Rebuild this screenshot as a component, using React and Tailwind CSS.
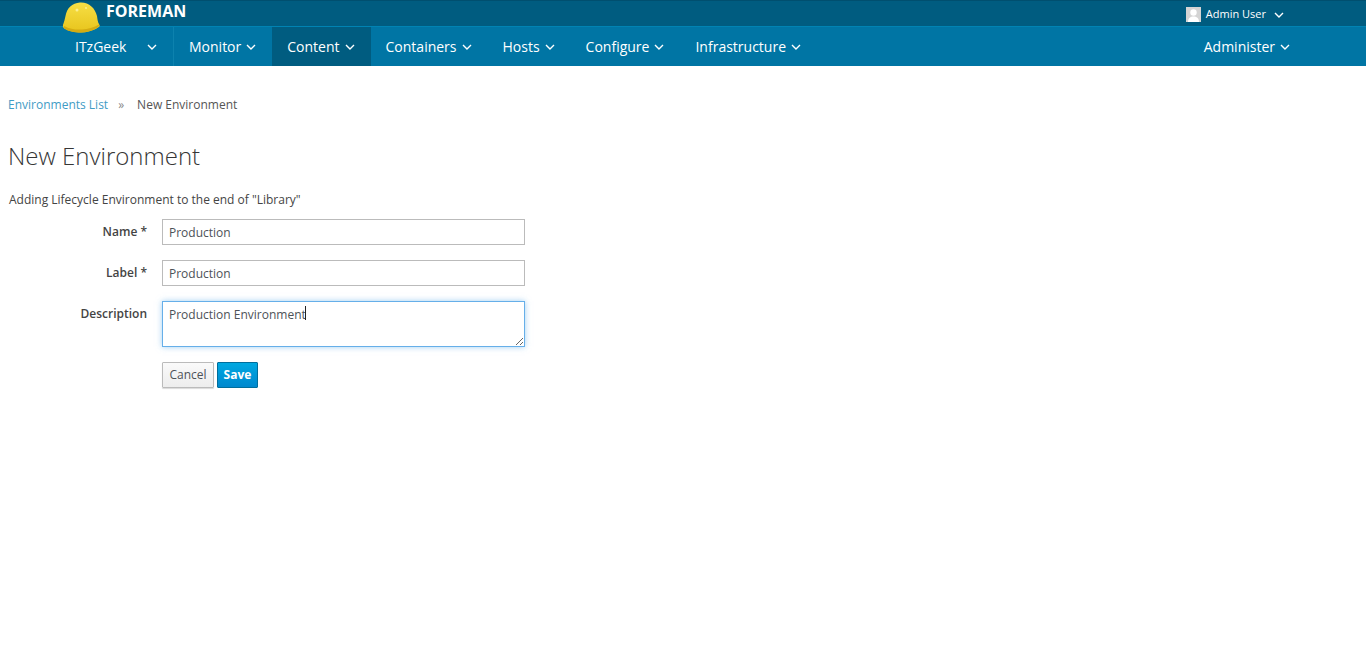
const navItems = ['Monitor', 'Content', 'Containers', 'Hosts', 'Configure', 'Infrastructure']

function Chevron({ className = '' }) {
  return (
    <svg viewBox="0 0 10 6" className={`w-[10px] h-[6px] ${className}`} fill="none" stroke="currentColor" strokeWidth="1.4">
      <path d="M1 1l4 4 4-4" />
    </svg>
  )
}

function Helmet() {
  return (
    <svg viewBox="0 0 40 33" className="absolute left-[61px] top-[1px] w-[40px] h-[33px]">
      <defs>
        <linearGradient id="hat" x1="0" y1="0" x2="0" y2="1">
          <stop offset="0" stopColor="#f6df45" />
          <stop offset="1" stopColor="#e8c41c" />
        </linearGradient>
      </defs>
      <path d="M2 24c1-3 2-6 2.500-9C6 7 11 2 19 1.500 28 1 34 7 36 15c.5 3 .5 6 2.500 9 1 1.500-2 3-5 4.500-3 1.500-8 3-13 3-7 0-13-1.500-16-3.500C2.500 27.500 1.500 26 2 24z" fill="url(#hat)" />
      <path d="M3 25c6 3 12 4 18 3.500 6-.5 12-2 17-5 .8 1.500-2 3.500-5 5-3 1.500-8 3-13 3-7 0-13-1.500-16-3.500-1-.7-1.500-1.700-1-3z" fill="#d4ac12" />
      <circle cx="16" cy="9" r="1.500" fill="#fbef8f" />
      <circle cx="25" cy="7" r="1" fill="#fbef8f" />
    </svg>
  )
}

function Avatar() {
  return (
    <svg viewBox="0 0 15 15" className="w-[15px] h-[15px] bg-[#d4d4d4]">
      <circle cx="7.500" cy="5.500" r="3.200" fill="#fff" />
      <path d="M2 15c0-4 2.500-5.500 5.500-5.500S13 11 13 15z" fill="#fff" />
    </svg>
  )
}

function FieldRow({ label, children, className = '' }) {
  return (
    <div className={`flex ${className}`}>
      <label className="w-[139px] pt-[4px] text-right text-[12px] leading-[17px] font-semibold text-[#444444]">{label}</label>
      <div className="ml-[15px] w-[363px]">{children}</div>
    </div>
  )
}

const inputClass = 'block w-full h-[26px] border border-[#bbbbbb] bg-white px-[6px] text-[12px] text-[#4d5258] outline-none'

export default function App() {
  return (
    <div className="min-h-[662px] bg-white font-['Open_Sans',sans-serif]">
      <header className="relative">
        <div className="flex h-[26px] items-center border-t border-[#004f6f] bg-[#005c80]">
          <span className="ml-[106px] -mt-[6px] text-[16px] font-bold leading-[22px] text-white">FOREMAN</span>
          <div className="ml-auto mr-[82px] mt-[2px] flex items-center text-white">
            <Avatar />
            <span className="ml-[5px] text-[11px]">Admin User</span>
            <Chevron className="ml-[8px]" />
          </div>
        </div>
        <nav className="flex h-[40px] items-center border-t border-[#0083b3] bg-[#0075a4] text-[14px] text-white">
          <div className="ml-[75px] flex h-full w-[99px] items-center border-r border-[#0d82ae]">
            <span>ITzGeek</span>
            <Chevron className="ml-[21px]" />
          </div>
          {navItems.map((item) => (
            <div key={item} className={`flex h-full items-center px-[15px] ${item === 'Content' ? 'bg-[#005c80]' : ''}`}>
              <span>{item}</span>
              <Chevron className="ml-[5px] mr-[1px]" />
            </div>
          ))}
          <div className="ml-auto mr-[76px] flex items-center">
            <span>Administer</span>
            <Chevron className="ml-[5px]" />
          </div>
        </nav>
        <Helmet />
      </header>

      <main className="pl-[8px]">
        <div className="mt-[30px] flex items-center text-[12px] leading-[17px]">
          <a className="text-[#3f9cc5]">Environments List</a>
          <span className="ml-[10px] text-[#8a8a8a]">»</span>
          <span className="ml-[13px] text-[#555555]">New Environment</span>
        </div>
        <h1 className="mt-[26px] text-[24px] font-light leading-[33px] text-[#363636]">New Environment</h1>
        <p className="mt-[19px] ml-[1px] text-[12px] leading-[17px] text-[#444444]">Adding Lifecycle Environment to the end of "Library"</p>

        <form className="mt-[11px]">
          <FieldRow label="Name *">
            <input className={inputClass} defaultValue="Production" />
          </FieldRow>
          <FieldRow label="Label *" className="mt-[15px]">
            <input className={inputClass} defaultValue="Production" />
          </FieldRow>
          <FieldRow label="Description" className="mt-[15px]">
            <div className="relative">
              <textarea
                className="block h-[46px] w-full border border-[#66afe9] bg-white px-[6px] py-[4px] text-[12px] leading-[17px] text-[#4d5258] outline-none shadow-[0_0_6px_rgba(102,175,233,0.6)]"
                defaultValue="Production Environment"
              />
              <span className="absolute left-[143px] top-[5px] h-[14px] w-px bg-[#222222]" />
            </div>
          </FieldRow>
          <div className="ml-[154px] mt-[15px] flex gap-[3px]">
            <button type="button" className="h-[26px] w-[52px] rounded-[1px] border border-[#bbbbbb] bg-gradient-to-b from-[#fafafa] to-[#ededed] text-[12px] text-[#4d5258] shadow-[0_1px_1px_rgba(0,0,0,0.15)]">Cancel</button>
            <button type="button" className="h-[26px] w-[41px] rounded-[1px] border border-[#006e9c] bg-gradient-to-b from-[#00a8e1] to-[#0088ce] text-[12px] font-bold text-white">Save</button>
          </div>
        </form>
      </main>
    </div>
  )
}
